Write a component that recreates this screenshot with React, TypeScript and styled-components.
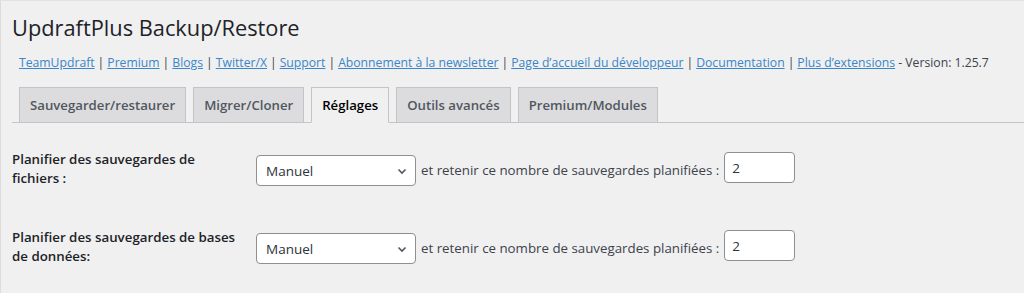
import styled, { createGlobalStyle } from "styled-components"

const GlobalStyle = createGlobalStyle`
  html, body {
    margin: 0;
    padding: 0;
    background: #f0f0f1;
  }
  body {
    font-family: "Open Sans", "Noto Sans", sans-serif;
    color: #1d2327;
  }
`

const Page = styled.div`
  width: 1024px;
  height: 293px;
  box-sizing: border-box;
  border-top: 1px solid #e2e2e4;
  border-left: 1px solid #dcdcde;
  padding: 0 0 0 11px;
  overflow: hidden;
`

const Title = styled.h1`
  margin: 0;
  padding: 12px 0 0;
  font-size: 21.8px;
  font-weight: 400;
  line-height: 30px;
  color: #1d2327;
`

const LinkRow = styled.div`
  margin: 10px 0 0 7px;
  font-size: 12.2px;
  line-height: 20px;
  color: #3c434a;
  white-space: nowrap;
`

const Link = styled.a`
  color: #3a86c8;
  text-decoration: underline;
`

const Sep = styled.span`
  color: #3c434a;
  margin: 0 3px;
`

const TabBar = styled.nav`
  display: flex;
  gap: 7px;
  margin-top: 14px;
  padding-left: 7px;
  border-bottom: 1px solid #c3c4c7;
  height: 35px;
`

const Tab = styled.div<{ $active?: boolean }>`
  box-sizing: border-box;
  height: ${(p) => (p.$active ? "36px" : "35px")};
  padding: 5px 10px;
  font-size: 13.2px;
  font-weight: 600;
  line-height: 24px;
  border: 1px solid #c3c4c7;
  border-bottom: ${(p) => (p.$active ? "1px solid #f0f0f1" : "none")};
  background: ${(p) => (p.$active ? "#f0f0f1" : "#dcdcde")};
  color: ${(p) => (p.$active ? "#000" : "#50575e")};
  white-space: nowrap;
`

const Form = styled.div`
  display: flex;
  flex-direction: column;
  gap: 40px;
  padding-top: 27px;
`

const Row = styled.div`
  display: grid;
  grid-template-columns: 244px auto;
  align-items: start;
`

const Label = styled.div`
  font-size: 13.3px;
  font-weight: 600;
  line-height: 19px;
  width: 228px;
  color: #1d2327;
`

const Fields = styled.div`
  display: flex;
  align-items: flex-start;
  gap: 5px;
  font-size: 13.3px;
  color: #3c434a;
  white-space: nowrap;
`

const SelectBox = styled.div`
  box-sizing: border-box;
  width: 160px;
  height: 31px;
  margin-top: 5px;
  display: flex;
  align-items: center;
  justify-content: space-between;
  padding: 0 7px 0 9px;
  border: 1px solid #8c8f94;
  border-radius: 4px;
  background: #fff;
  color: #2c3338;
  font-size: 13.5px;
`

const NumberBox = styled.div`
  box-sizing: border-box;
  width: 71px;
  height: 31px;
  margin-top: 2px;
  display: flex;
  align-items: center;
  padding: 0 7px;
  border: 1px solid #8c8f94;
  border-radius: 4px;
  background: #fff;
  color: #2c3338;
  font-size: 13.5px;
`

const Retain = styled.span`
  line-height: 31px;
  margin-top: 5px;
`

const Chevron = () => (
  <svg width="12" height="12" viewBox="0 0 12 12">
    <path d="M2.5 4.5 L6 8 L9.5 4.5" fill="none" stroke="#50575e" strokeWidth="1.6" />
  </svg>
)

const links = [
  "TeamUpdraft",
  "Premium",
  "Blogs",
  "Twitter/X",
  "Support",
  "Abonnement à la newsletter",
  "Page d’accueil du développeur",
  "Documentation",
  "Plus d’extensions",
]

const tabs = ["Sauvegarder/restaurer", "Migrer/Cloner", "Réglages", "Outils avancés", "Premium/Modules"]

const rows = ["Planifier des sauvegardes de fichiers :", "Planifier des sauvegardes de bases de données:"]

export default function App() {
  return (
    <Page>
      <GlobalStyle />
      <Title>UpdraftPlus Backup/Restore</Title>
      <LinkRow>
        {links.map((l, i) => (
          <span key={l}>
            {i > 0 && <Sep>|</Sep>}
            <Link href="#">{l}</Link>
          </span>
        ))}
        {" - Version: 1.25.7"}
      </LinkRow>
      <TabBar>
        {tabs.map((t) => (
          <Tab key={t} $active={t === "Réglages"}>
            {t}
          </Tab>
        ))}
      </TabBar>
      <Form>
        {rows.map((r) => (
          <Row key={r}>
            <Label>{r}</Label>
            <Fields>
              <SelectBox>
                Manuel
                <Chevron />
              </SelectBox>
              <Retain>et retenir ce nombre de sauvegardes planifiées :</Retain>
              <NumberBox>2</NumberBox>
            </Fields>
          </Row>
        ))}
      </Form>
    </Page>
  )
}
